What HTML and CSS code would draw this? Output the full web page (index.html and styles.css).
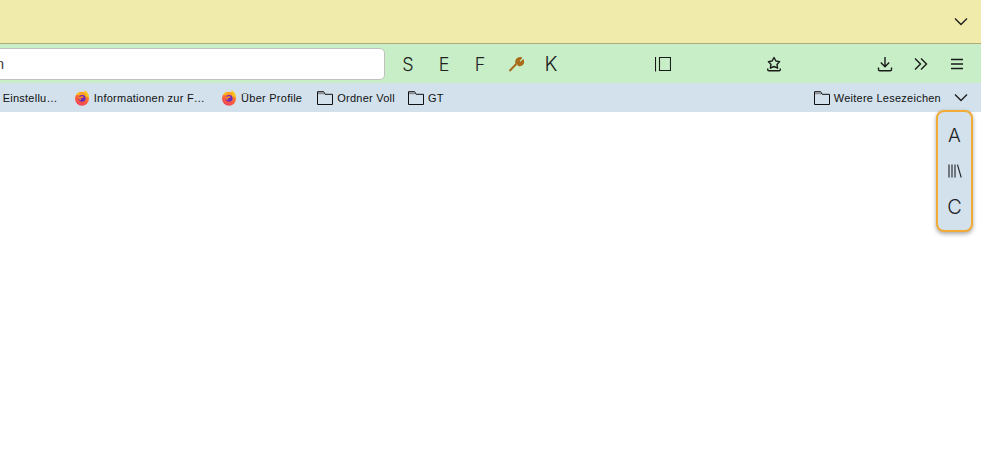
FILE: index.html
```html
<!DOCTYPE html>
<html lang="de">
<head>
<meta charset="utf-8">
<title>Browser</title>
<link rel="stylesheet" href="styles.css">
</head>
<body>
<svg class="defs" width="0" height="0" aria-hidden="true">
  <defs>
    <linearGradient id="foxbody" x1="0.7" y1="0" x2="0.3" y2="1">
      <stop offset="0" stop-color="#ffb11f"/>
      <stop offset="0.55" stop-color="#f9613a"/>
      <stop offset="1" stop-color="#ee3f5e"/>
    </linearGradient>
    <symbol id="fox" viewBox="0 0 16 16">
      <circle cx="8" cy="8.800" r="7" fill="url(#foxbody)"/>
      <path d="M2.400 4.500C3 3.200 4.200 2.300 5.600 2c-.5.800-.5 1.400-.2 2 1-.6 2.400-.5 3.600.3C11 5.500 11.200 8 10 9.300 11.800 8 12.500 5 10.500 2.200 10.300 1.500 10.200.9 10.500.2c2.400 1.200 3.300 2.700 3.800 4.300.5 1 .7 2.200.7 3.400l-3-2L8 4 4 5z" fill="#ffc31f"/>
      <circle cx="8.200" cy="8.300" r="3.400" fill="#6a2bb8"/>
      <path d="M4.800 6.500c1 .4 2.300.3 3.200-.4.900.1 1.400.7 1.500 1.300-1 .5-1.800.5-2.600.5-.4.800 0 1.600 1 1.900-1.500.5-3.600-.5-3.100-3.300z" fill="#ff8a1f"/>
    </symbol>
    <symbol id="folder" viewBox="0 0 16 14">
      <path d="M.5 13.500V.7h6.200l1.400 2.600h7.400v10.200z" fill="none" stroke="#111" stroke-width="1"/>
      <path d="M1 1.200h5.400L7.500 3.300H1z" fill="#8d8f93"/>
    </symbol>
    <symbol id="chev" viewBox="0 0 14 9">
      <path d="M1 1.500l6 6 6-6" fill="none" stroke="#1f1f1f" stroke-width="1.400"/>
    </symbol>
  </defs>
</svg>

<header class="titlebar">
  <svg class="chev"><use href="#chev"/></svg>
</header>

<nav class="toolbar">
  <div class="urlbar"><span class="urltext">Suchen</span></div>
  <div class="letters">
    <span class="tool">S</span>
    <span class="tool">E</span>
    <span class="tool">F</span>
    <svg class="tool-icon wrench" viewBox="0 0 16 16"><path d="M1.500 15l7-7.200M8.500 7.800c-.9-2.300.1-4.700 2.400-5.500.9-.3 1.600-.3 2.100-.2l-2.300 2.300.3 1.900 1.900.4 2.300-2.300c.3 2.400-1 4.500-3.300 4.900-.8.100-1.500 0-2-.3" fill="#a96b1a" stroke="#a96b1a" stroke-width="2" stroke-linejoin="round"/></svg>
    <span class="tool tool-k">K</span>
  </div>
  <div class="center-tools">
    <svg class="tool-icon" viewBox="0 0 16 16"><path d="M.5 1v14.500M4.500 1.500h11v13h-11z" fill="none" stroke="#1a1a1a" stroke-width="1.100"/></svg>
    <svg class="tool-icon star" viewBox="0 0 16 16"><path d="M8 1.500l1.900 3.500 3.700.6-2.600 2.800.6 3.800L8 10.500l-3.600 1.700.6-3.800-2.600-2.800 3.700-.6z" fill="none" stroke="#1a1a1a" stroke-width="1.400" stroke-linejoin="round"/><path d="M1.700 12.500v1c0 .8.500 1.300 1.300 1.300h10c.8 0 1.300-.5 1.300-1.300v-1" fill="none" stroke="#1a1a1a" stroke-width="1.400"/></svg>
  </div>
  <div class="right-tools">
    <svg class="tool-icon" viewBox="0 0 16 16"><path d="M8 1v9.500M3.800 6.500L8 10.700l4.200-4.200M1.500 11.500v2c0 .8.500 1.300 1.300 1.300h10.400c.8 0 1.300-.5 1.300-1.300v-2" fill="none" stroke="#1a1a1a" stroke-width="1.400"/></svg>
    <svg class="tool-icon" viewBox="0 0 16 16"><path d="M2 2.500L7.500 8 2 13.500M8 2.500L13.500 8 8 13.500" fill="none" stroke="#1a1a1a" stroke-width="1.400"/></svg>
    <svg class="tool-icon" viewBox="0 0 16 16"><path d="M2 3.500h12M2 8h12M2 12.500h12" fill="none" stroke="#1a1a1a" stroke-width="1.400"/></svg>
  </div>
</nav>

<nav class="bookmarks">
  <div class="bm-list">
    <span class="bm">Alle Einstellu…</span>
    <span class="bm bm-fox"><svg class="fav"><use href="#fox"/></svg>Informationen zur F…</span>
    <span class="bm bm-fox"><svg class="fav"><use href="#fox"/></svg>Über Profile</span>
    <span class="bm bm-dir"><svg class="folder"><use href="#folder"/></svg>Ordner Voll</span>
    <span class="bm"><svg class="folder"><use href="#folder"/></svg>GT</span>
  </div>
  <span class="bm"><svg class="folder"><use href="#folder"/></svg>Weitere Lesezeichen</span>
  <svg class="chev bm-chev"><use href="#chev"/></svg>
</nav>

<main class="content"></main>

<aside class="popup">
  <span class="pop-item">A</span>
  <svg class="pop-icon" viewBox="0 0 14 14"><path d="M1 .5v13M4 .5v13M7 .5v13M9.500.7l3.700 12.800" fill="none" stroke="#222" stroke-width="1.100"/></svg>
  <span class="pop-item pop-c">C</span>
</aside>
</body>
</html>
```
FILE: styles.css
```css
* { box-sizing: border-box; }
html, body { margin: 0; height: 100%; background: #fff; overflow: hidden; }
body { position: relative; font-family: "Liberation Sans", Arial, sans-serif; color: #111; }
.defs { position: absolute; }

.titlebar {
  height: 44px;
  background: #f0ebaa;
  border-bottom: 1px solid #b3aa78;
  display: flex;
  justify-content: flex-end;
  align-items: center;
  padding: 0 13px 0 0;
}
.chev { width: 14px; height: 9px; display: block; }

.toolbar {
  height: 39px;
  background: #c7eec6;
  display: flex;
  align-items: center;
  padding-top: 1px;
}
.urlbar {
  width: 395px;
  height: 32px;
  margin-left: -10px;
  background: #fff;
  border: 1px solid #bfc2bd;
  border-radius: 5px;
  display: flex;
  align-items: center;
  justify-content: flex-end;
  flex: none;
}
.urltext { font-size: 14px; color: #333; margin-right: 380px; white-space: nowrap; }

.letters { display: flex; align-items: center; margin-left: 5px; }
.tool {
  width: 36px;
  text-align: center;
  font-family: Inter, sans-serif;
  font-weight: 300;
  font-size: 18px;
  color: #222;
}
.tool-k { font-size: 20px; margin-left: -1px; }
.tool-icon { width: 16px; height: 16px; flex: none; display: block; }
.wrench { margin: 0 10px; }

.center-tools { display: flex; align-items: center; gap: 95px; margin-left: 86px; }
.right-tools { display: flex; align-items: center; gap: 20px; margin-left: auto; padding-right: 16px; }

.bookmarks {
  height: 29px;
  background: #d2e1ec;
  display: flex;
  align-items: center;
  font-size: 11px;
  letter-spacing: .25px;
  padding-right: 13px;
}
.bm-list { display: flex; align-items: center; flex: 1; margin-left: -20px; gap: 13px; }
.bm { display: inline-flex; align-items: center; gap: 4px; white-space: nowrap; }
.bm-fox { margin-left: 3px; }
.bm-dir { margin-left: 2px; }
.fav { width: 16px; height: 16px; flex: none; }
.folder { width: 16px; height: 14px; flex: none; }
.bm-chev { margin-left: 13px; }

.content { height: calc(100% - 112px); background: #fff; }

.popup {
  position: absolute;
  left: 936px;
  top: 110px;
  width: 37px;
  height: 122px;
  background: #d2e1ec;
  border: 2px solid #f2ab37;
  border-radius: 8px;
  box-shadow: 0 2px 4px rgba(0, 0, 0, .35);
  display: flex;
  flex-direction: column;
  align-items: center;
  justify-content: space-around;
  padding: 3px 0;
}
.pop-item { font-family: Inter, sans-serif; font-weight: 300; font-size: 19px; color: #222; }
.pop-c { font-size: 20px; }
.pop-icon { width: 14px; height: 14px; display: block; }
```
